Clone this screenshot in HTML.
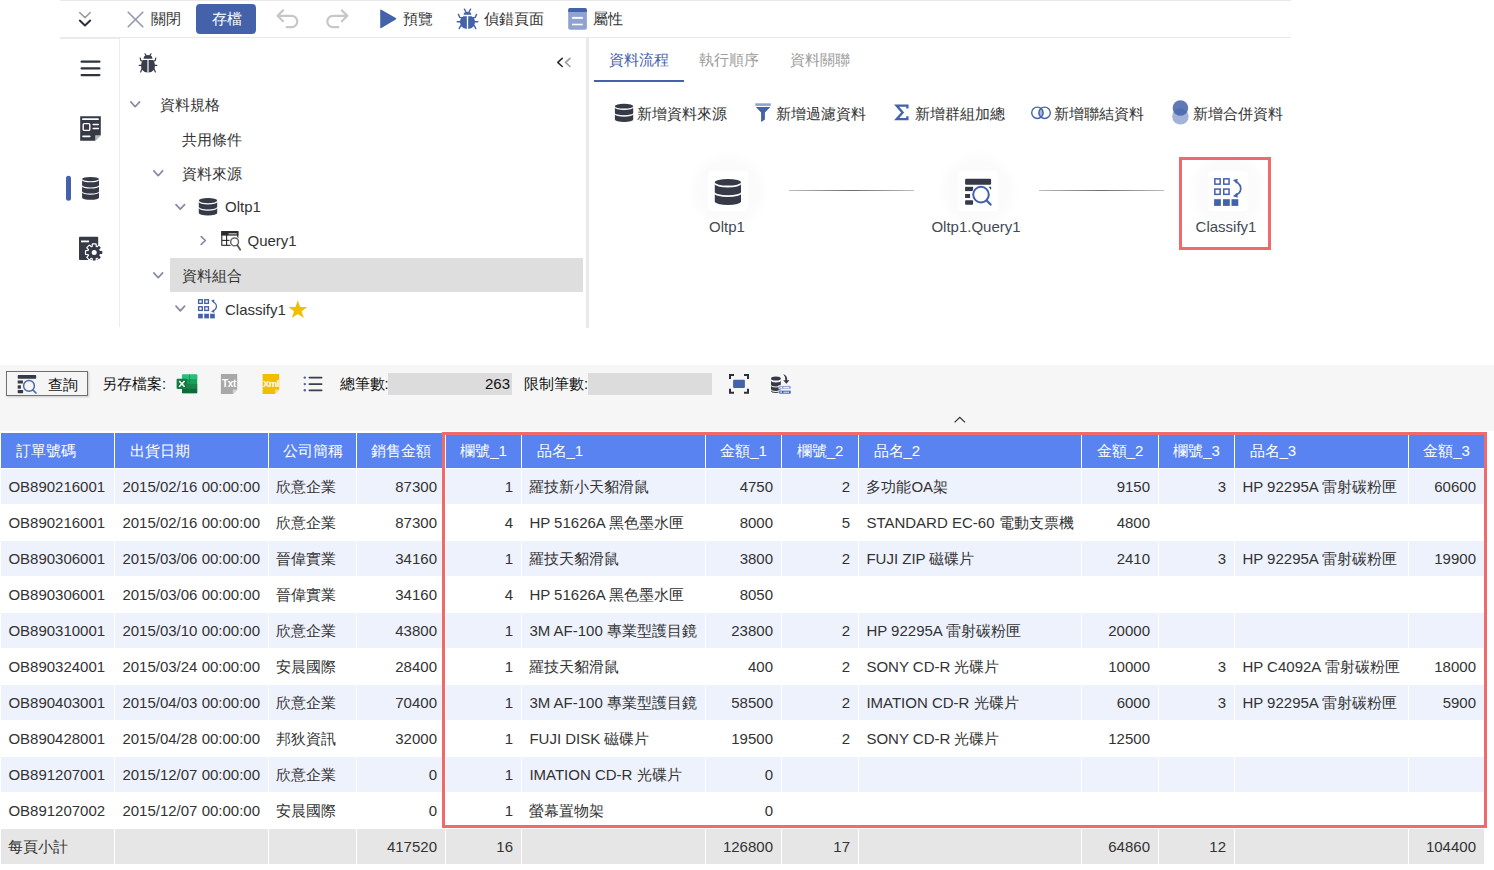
<!DOCTYPE html>
<html><head><meta charset="utf-8">
<style>
*{box-sizing:border-box}
html,body{margin:0;padding:0}
body{width:1494px;height:870px;overflow:hidden;background:#fff;position:relative;font-family:"Liberation Sans",sans-serif;color:#333;}
.a{position:absolute}
.t{position:absolute;white-space:nowrap;line-height:20px}
svg{position:absolute;overflow:visible}
.c{position:absolute}
.ct{position:absolute;white-space:nowrap;font-size:15px;color:#333}
.h{color:#fff}
</style></head><body>

<!-- ===== TOP TOOLBAR ===== -->
<div class="a" style="left:60px;top:0;width:1231px;height:1px;background:#e9e9e9"></div>
<div class="a" style="left:60px;top:37px;width:1231px;height:1px;background:#e9e9e9"></div>
<div class="a" style="left:60px;top:38px;width:59px;height:1px;background:#ececec"></div>
<!-- double chevron -->
<svg style="left:0;top:0" width="1494" height="40">
<polyline points="79.8,12.6 85,17.6 90.2,12.6" fill="none" stroke="#9c9ca0" stroke-width="1.5" stroke-linecap="round" stroke-linejoin="round"/>
<polyline points="79.8,20.6 85,25.4 90.2,20.6" fill="none" stroke="#2b2e3b" stroke-width="2" stroke-linecap="round" stroke-linejoin="round"/>
<!-- X -->
<line x1="128.2" y1="12.2" x2="142.8" y2="26.8" stroke="#9498b2" stroke-width="1.6" stroke-linecap="round"/>
<line x1="142.8" y1="12.2" x2="128.2" y2="26.8" stroke="#9498b2" stroke-width="1.6" stroke-linecap="round"/>
<!-- undo -->
<path d="M283,10.4 L277.6,15.8 L283,21.2 M277.8,15.8 H291.6 A5.7,5.7 0 0 1 291.6,27.2 H286.8" fill="none" stroke="#c6c6cb" stroke-width="2.2" stroke-linecap="round" stroke-linejoin="round"/>
<!-- redo -->
<path d="M341.8,10.4 L347.4,15.8 L341.8,21.2 M347.2,15.8 H333 A5.7,5.7 0 0 0 333,27.2 H338.2" fill="none" stroke="#c6c6cb" stroke-width="2.2" stroke-linecap="round" stroke-linejoin="round"/>
<!-- play -->
<path d="M380.2,10.4 Q380.2,9 381.4,9.7 L395.8,18 Q397,18.8 395.8,19.5 L381.4,27.9 Q380.2,28.6 380.2,27.2 Z" fill="#4362aa"/>
<!-- bug -->
<g fill="#4362aa" stroke="#4362aa">
<path d="M463.6,14.7 Q463.6,11.8 467.5,11.8 Q471.4,11.8 471.4,14.7 Z" stroke="none"/>
<path d="M463.4,16.2 H466.8 V29 Q462.6,28.6 460.8,25.8 Q459.8,23.4 460.1,20.4 Q460.6,17.6 463.4,16.2 Z" stroke="none"/>
<path d="M471.6,16.2 H468.2 V29 Q472.4,28.6 474.2,25.8 Q475.2,23.4 474.9,20.4 Q474.4,17.6 471.6,16.2 Z" stroke="none"/>
<g fill="none" stroke-width="1.4" stroke-linecap="round">
<path d="M464.4,9.2 L465.8,11.6 M470.6,9.2 L469.2,11.6"/>
<path d="M458.4,14.4 L459.8,17.4 L462,17.8 M476.6,14.4 L475.2,17.4 L473,17.8"/>
<path d="M457.2,21.8 H460.6 M477.8,21.8 H474.4"/>
<path d="M459.2,28.6 L460.6,25.8 L462.2,25.2 M475.8,28.6 L474.4,25.8 L472.8,25.2"/>
</g>
</g>
<!-- props -->
<rect x="568.2" y="8" width="18.7" height="21.7" rx="2" fill="#8fa2d0"/>
<path d="M568.2,12 V10 Q568.2,8 570.2,8 H584.9 Q586.9,8 586.9,10 V12 Z" fill="#4362aa"/>
<rect x="572" y="16.9" width="10.8" height="1.9" fill="#fff"/>
<rect x="572" y="23.7" width="10.8" height="1.6" fill="#fff"/>
</svg>
<div class="a" style="left:196px;top:4px;width:60px;height:30px;background:#4362aa;border-radius:4px"></div>
<div class="t" style="left:151px;top:9px;font-size:14.6px;color:#333">關閉</div>
<div class="t" style="left:212px;top:9px;font-size:14.6px;color:#fff">存檔</div>
<div class="t" style="left:403px;top:9px;font-size:14.6px;color:#333">預覽</div>
<div class="t" style="left:484px;top:9px;font-size:14.6px;color:#333">偵錯頁面</div>
<div class="t" style="left:593px;top:9px;font-size:14.6px;color:#333">屬性</div>


<!-- ===== SIDEBAR ===== -->
<div class="a" style="left:119px;top:38px;width:1px;height:289px;background:#ececec"></div>
<svg style="left:0;top:0" width="120" height="330">
<g stroke="#2f3241" stroke-width="2.2" stroke-linecap="round">
<line x1="81.6" y1="61.7" x2="99.4" y2="61.7"/>
<line x1="81.6" y1="68.4" x2="99.4" y2="68.4"/>
<line x1="81.6" y1="75.1" x2="99.4" y2="75.1"/>
</g>
<path d="M80.2,116.2 H100.8 V135 L95,140.8 H80.2 Z" fill="#363946"/>
<path d="M100.8,135.2 L95.2,140.8 V135.2 Z" fill="#b8b8bc"/>
<g stroke="#fff" stroke-linecap="round" fill="none">
<line x1="82.9" y1="119.2" x2="98" y2="119.2" stroke-width="1.8"/>
<rect x="83.2" y="123.6" width="6.6" height="6.8" rx="1" stroke-width="1.4"/>
<line x1="93.2" y1="124.6" x2="98.4" y2="124.6" stroke-width="1.5"/>
<line x1="93.2" y1="128.6" x2="98.4" y2="128.6" stroke-width="1.5"/>
<line x1="83" y1="136.4" x2="89.8" y2="136.4" stroke-width="1.6"/>
</g>
<rect x="66" y="175.8" width="5" height="25" rx="2.5" fill="#4362aa"/>
<g fill="#363946"><ellipse cx="90.55" cy="179.10" rx="8.45" ry="2.10"/><path d="M82.10,180.20 A8.45,2.10 0 0 0 99.00,180.20 V185.30 A8.45,2.10 0 0 1 82.10,185.30 Z"/><path d="M82.10,186.40 A8.45,2.10 0 0 0 99.00,186.40 V191.50 A8.45,2.10 0 0 1 82.10,191.50 Z"/><path d="M82.10,192.60 A8.45,2.10 0 0 0 99.00,192.60 V197.70 A8.45,2.10 0 0 1 82.10,197.70 Z"/></g>
<rect x="79" y="236.8" width="19.2" height="23.2" rx="0.8" fill="#363946"/>
<line x1="81" y1="241.4" x2="89" y2="241.4" stroke="#fff" stroke-width="1.8"/>
<g transform="translate(94.2,252.5)">
<g fill="#fff" stroke="#fff" stroke-width="2.4" stroke-linejoin="round">
<circle r="5.9"/>
<rect x="-1.4" y="-8.1" width="2.8" height="16.2"/>
<rect x="-1.4" y="-8.1" width="2.8" height="16.2" transform="rotate(45)"/>
<rect x="-1.4" y="-8.1" width="2.8" height="16.2" transform="rotate(90)"/>
<rect x="-1.4" y="-8.1" width="2.8" height="16.2" transform="rotate(135)"/>
</g>
<g fill="#363946">
<circle r="5.9"/>
<rect x="-1.4" y="-8.1" width="2.8" height="16.2" rx="0.4"/>
<rect x="-1.4" y="-8.1" width="2.8" height="16.2" rx="0.4" transform="rotate(45)"/>
<rect x="-1.4" y="-8.1" width="2.8" height="16.2" rx="0.4" transform="rotate(90)"/>
<rect x="-1.4" y="-8.1" width="2.8" height="16.2" rx="0.4" transform="rotate(135)"/>
</g>
<circle r="2.5" fill="#fff"/>
</g>
</svg>

<!-- ===== TREE ===== -->
<div class="a" style="left:586px;top:38px;width:3px;height:290px;background:#e9e9e9"></div>
<svg style="left:0;top:0" width="600" height="330">
<!-- bug -->
<g fill="#3a3d4b">
<path d="M144.2,56.6 Q144.6,55 148,55 Q151.4,55 151.8,56.6 L152.6,58.8 H143.4 Z"/>
<path d="M143.2,60 H147.5 V72.6 Q143.6,72.2 141.8,69.6 Q140.8,67 141.2,64 Q141.8,61.2 143.2,60 Z"/>
<path d="M152.8,60 H148.5 V72.6 Q152.4,72.2 154.2,69.6 Q155.2,67 154.8,64 Q154.2,61.2 152.8,60 Z"/>
<rect x="147.3" y="60" width="1.4" height="12.6" fill="#b9bac0"/>
<g fill="none" stroke="#3a3d4b" stroke-width="1.2" stroke-linecap="round">
<path d="M145,53.8 L146,55.4 M151,53.8 L150,55.4"/>
<path d="M140.2,58 L140.8,60.6 L143,61.4 M155.8,58 L155.2,60.6 L153,61.4"/>
<path d="M139.2,65.4 H141.8 M156.8,65.4 H154.2"/>
<path d="M140.6,72 L142,69 L143,68.4 M155.4,72 L154,69 L153,68.4"/>
</g>
</g>
<!-- << -->
<polyline points="562.2,58.3 557.8,62.4 562.2,66.5" fill="none" stroke="#2b2e3b" stroke-width="1.6" stroke-linecap="round" stroke-linejoin="round"/>
<polyline points="570,58.3 565.6,62.4 570,66.5" fill="none" stroke="#9b9da4" stroke-width="1.6" stroke-linecap="round" stroke-linejoin="round"/>
<!-- highlight row -->
<rect x="170" y="258" width="413" height="34" fill="#dedede"/>
<polyline points="130.8,101.9 135.2,106.7 139.6,101.9" fill="none" stroke="#858aa4" stroke-width="1.7" stroke-linecap="round" stroke-linejoin="round"/>
<polyline points="153.8,170.9 158.2,175.7 162.6,170.9" fill="none" stroke="#858aa4" stroke-width="1.7" stroke-linecap="round" stroke-linejoin="round"/>
<polyline points="176,204.6 180.3,209.2 184.6,204.6" fill="none" stroke="#858aa4" stroke-width="1.7" stroke-linecap="round" stroke-linejoin="round"/>
<polyline points="153.8,272.9 158.2,277.7 162.6,272.9" fill="none" stroke="#858aa4" stroke-width="1.7" stroke-linecap="round" stroke-linejoin="round"/>
<polyline points="176,306.2 180.3,310.8 184.6,306.2" fill="none" stroke="#858aa4" stroke-width="1.7" stroke-linecap="round" stroke-linejoin="round"/>
<polyline points="201.2,236.6 205.4,240.5 201.2,244.4" fill="none" stroke="#858aa4" stroke-width="1.7" stroke-linecap="round" stroke-linejoin="round"/>
<g fill="#363946"><ellipse cx="208.00" cy="200.60" rx="9.20" ry="2.60"/><path d="M198.80,201.90 A9.20,2.60 0 0 0 217.20,201.90 V206.80 A9.20,2.60 0 0 1 198.80,206.80 Z"/><path d="M198.80,208.10 A9.20,2.60 0 0 0 217.20,208.10 V213.00 A9.20,2.60 0 0 1 198.80,213.00 Z"/></g>
<!-- query table icon -->
<g>
<rect x="221.8" y="231.7" width="16" height="13.6" fill="none" stroke="#262626" stroke-width="1.1"/>
<rect x="221.3" y="231.2" width="17" height="4.4" fill="#2b2b2b"/>
<line x1="228.6" y1="233.8" x2="236.8" y2="233.8" stroke="#c8c8c8" stroke-width="1.2"/>
<line x1="226.6" y1="235" x2="226.6" y2="245.4" stroke="#262626" stroke-width="1.1"/>
<line x1="222" y1="240.4" x2="231" y2="240.4" stroke="#262626" stroke-width="1.1"/>
<circle cx="234.6" cy="241.9" r="5.4" fill="#fff"/>
<circle cx="234.6" cy="241.9" r="3.9" fill="none" stroke="#6a6a6a" stroke-width="1.5"/>
<line x1="237.4" y1="245.2" x2="240.2" y2="249.8" stroke="#555" stroke-width="1.7" stroke-linecap="round"/>
</g>
<g transform="translate(198.1,299.2) scale(0.69)" fill="none" stroke="#4362aa">
<rect x="0.75" y="0.75" width="5.3" height="5.3" stroke-width="2.0"/>
<rect x="9.65" y="0.75" width="5.3" height="5.3" stroke-width="2.0"/>
<rect x="0.75" y="10.95" width="5.3" height="5.3" stroke-width="2.0"/>
<rect x="9.65" y="10.95" width="5.3" height="5.3" stroke-width="2.0"/>
<rect x="0" y="21.1" width="6.8" height="6.7" fill="#4362aa" stroke="none"/>
<rect x="8.9" y="21.1" width="6.8" height="6.7" fill="#4362aa" stroke="none"/>
<rect x="17.4" y="21.1" width="6.8" height="6.7" fill="#4362aa" stroke="none"/>
<path d="M21.2,2.8 Q27.2,6.4 26.6,11.2 Q26,15.2 21.2,17.4" stroke-width="1.7"/>
<path d="M18.8,1.8 L23.6,0.6 L22.8,5.6 Z" fill="#4362aa" stroke="none"/>
<path d="M18.8,18.2 L23.2,14.4 L23.6,19.6 Z" fill="#4362aa" stroke="none"/>
</g>
<!-- star -->
<path d="M297.8,300.2 L300.2,306.9 L307.2,307 L301.6,311.3 L303.7,318 L297.8,314 L291.9,318 L294,311.3 L288.4,307 L295.4,306.9 Z" fill="#f0c000"/>
</svg>
<div class="t" style="left:160px;top:95px;font-size:15px;color:#333">資料規格</div>
<div class="t" style="left:182px;top:130px;font-size:15px;color:#333">共用條件</div>
<div class="t" style="left:182px;top:163.5px;font-size:15px;color:#333">資料來源</div>
<div class="t" style="left:225px;top:197px;font-size:15px;color:#333">Oltp1</div>
<div class="t" style="left:247.5px;top:230.5px;font-size:15px;color:#333">Query1</div>
<div class="t" style="left:182px;top:265.5px;font-size:15px;color:#333">資料組合</div>
<div class="t" style="left:225px;top:299.5px;font-size:15px;color:#333">Classify1</div>


<!-- ===== FLOW ===== -->
<div class="a" style="left:685.9000000000001px;top:149.0px;width:84px;height:84px;border-radius:50%;background:radial-gradient(circle, rgba(0,0,0,0.018) 0%, rgba(0,0,0,0.016) 50%, rgba(0,0,0,0) 70%)"></div><div class="a" style="left:708.2px;top:171.2px;width:39.5px;height:40px;border-radius:4px;background:#fff"></div>
<div class="a" style="left:935.9000000000001px;top:148.8px;width:84px;height:84px;border-radius:50%;background:radial-gradient(circle, rgba(0,0,0,0.018) 0%, rgba(0,0,0,0.016) 50%, rgba(0,0,0,0) 70%)"></div><div class="a" style="left:958.2px;top:171.0px;width:39.5px;height:40px;border-radius:4px;background:#fff"></div>
<div class="a" style="left:1185.9px;top:148.8px;width:84px;height:84px;border-radius:50%;background:radial-gradient(circle, rgba(0,0,0,0.018) 0%, rgba(0,0,0,0.016) 50%, rgba(0,0,0,0) 70%)"></div><div class="a" style="left:1208.2px;top:171.0px;width:39.5px;height:40px;border-radius:4px;background:#fff"></div>
<div class="a" style="left:789px;top:189.5px;width:125px;height:1px;background:linear-gradient(to right,#bdbdbd,#6e6e6e 50%,#bdbdbd)"></div>
<div class="a" style="left:1039px;top:189.5px;width:125px;height:1px;background:linear-gradient(to right,#bdbdbd,#6e6e6e 50%,#bdbdbd)"></div>
<div class="a" style="left:1179px;top:157px;width:92px;height:93px;border:3px solid #f06a6b"></div>
<svg style="left:0;top:0" width="1300" height="330">
<rect x="594" y="80" width="90" height="2" fill="#4362aa"/>
<g fill="#363946"><ellipse cx="624.05" cy="106.20" rx="9.15" ry="2.40"/><path d="M614.90,107.60 A9.15,2.40 0 0 0 633.20,107.60 V112.90 A9.15,2.40 0 0 1 614.90,112.90 Z"/><path d="M614.90,114.30 A9.15,2.40 0 0 0 633.20,114.30 V119.60 A9.15,2.40 0 0 1 614.90,119.60 Z"/></g>
<!-- filter -->
<rect x="755.3" y="103.3" width="15.5" height="2.6" fill="#8ea1d1"/>
<path d="M755.8,107.1 H770.4 L764.9,112.6 V119.6 L761.1,122 V112.6 Z" fill="#4362aa"/>
<!-- sigma -->
<path d="M907.4,108.6 V105.6 H896.6 L902.6,112.4 L896.6,119.2 H907.4 V116.2" fill="none" stroke="#4362aa" stroke-width="2.3" stroke-linejoin="miter"/>
<!-- join -->
<path d="M1041,107.6 A6.3,6.3 0 0 1 1041,118 A6.3,6.3 0 0 1 1041,107.6 Z" fill="#a9b6da"/>
<circle cx="1037.4" cy="112.8" r="5.7" fill="none" stroke="#4362aa" stroke-width="1.4"/>
<circle cx="1044.6" cy="112.8" r="5.7" fill="none" stroke="#4362aa" stroke-width="1.4"/>
<!-- merge -->
<circle cx="1180.4" cy="116.4" r="8.2" fill="#a3b2d8"/>
<circle cx="1180.4" cy="108" r="7.8" fill="#4362aa" fill-opacity="0.85"/>
<!-- node icons -->
<g fill="#363946"><ellipse cx="727.90" cy="182.30" rx="13.10" ry="3.30"/><path d="M714.80,184.10 A13.10,3.30 0 0 0 741.00,184.10 V191.95 A13.10,3.30 0 0 1 714.80,191.95 Z"/><path d="M714.80,193.75 A13.10,3.30 0 0 0 741.00,193.75 V201.60 A13.10,3.30 0 0 1 714.80,201.60 Z"/></g>
<g>
<rect x="965.1" y="178.8" width="26" height="6" rx="1.2" fill="#363946"/>
<rect x="965.1" y="186.8" width="8" height="4.3" fill="#363946"/>
<rect x="965.1" y="194" width="5" height="4" fill="#363946"/>
<rect x="965.1" y="200.3" width="8" height="4.4" rx="0.8" fill="#363946"/>
<path d="M988.6,186.8 H991.1 V190 Z" fill="#363946"/>
<circle cx="981" cy="194.6" r="9.4" fill="#fff"/>
<circle cx="981" cy="194.6" r="7.8" fill="none" stroke="#3f5fb0" stroke-width="2"/>
<line x1="986.6" y1="200.4" x2="990.6" y2="204.6" stroke="#3f5fb0" stroke-width="2.2" stroke-linecap="round"/>
</g>
<g transform="translate(1214.1,178.1) scale(1.0)" fill="none" stroke="#4362aa">
<rect x="0.75" y="0.75" width="5.3" height="5.3" stroke-width="1.5"/>
<rect x="9.65" y="0.75" width="5.3" height="5.3" stroke-width="1.5"/>
<rect x="0.75" y="10.95" width="5.3" height="5.3" stroke-width="1.5"/>
<rect x="9.65" y="10.95" width="5.3" height="5.3" stroke-width="1.5"/>
<rect x="0" y="21.1" width="6.8" height="6.7" fill="#4362aa" stroke="none"/>
<rect x="8.9" y="21.1" width="6.8" height="6.7" fill="#4362aa" stroke="none"/>
<rect x="17.4" y="21.1" width="6.8" height="6.7" fill="#4362aa" stroke="none"/>
<path d="M21.2,2.8 Q27.2,6.4 26.6,11.2 Q26,15.2 21.2,17.4" stroke-width="1.7"/>
<path d="M18.8,1.8 L23.6,0.6 L22.8,5.6 Z" fill="#4362aa" stroke="none"/>
<path d="M18.8,18.2 L23.2,14.4 L23.6,19.6 Z" fill="#4362aa" stroke="none"/>
</g>
</svg>
<div class="t" style="left:609px;top:50px;font-size:15px;color:#4362aa">資料流程</div>
<div class="t" style="left:699px;top:50px;font-size:15px;color:#9d9d9d">執行順序</div>
<div class="t" style="left:789.5px;top:50px;font-size:15px;color:#9d9d9d">資料關聯</div>
<div class="t" style="left:636.5px;top:103.5px;font-size:15px;color:#333">新增資料來源</div>
<div class="t" style="left:775.5px;top:103.5px;font-size:15px;color:#333">新增過濾資料</div>
<div class="t" style="left:914.5px;top:103.5px;font-size:15px;color:#333">新增群組加總</div>
<div class="t" style="left:1054px;top:103.5px;font-size:15px;color:#333">新增聯結資料</div>
<div class="t" style="left:1193px;top:103.5px;font-size:15px;color:#333">新增合併資料</div>
<div class="t" style="left:699px;top:216.5px;width:56px;text-align:center;font-size:15px;color:#444a55">Oltp1</div>
<div class="t" style="left:920px;top:216.5px;width:112px;text-align:center;font-size:15px;color:#444a55">Oltp1.Query1</div>
<div class="t" style="left:1180px;top:216.5px;width:92px;text-align:center;font-size:15px;color:#444a55">Classify1</div>


<!-- ===== BOTTOM ===== -->
<div class="a" style="left:0;top:365px;width:1494px;height:66px;background:#f6f6f6"></div>
<div class="a" style="left:6px;top:371px;width:82px;height:25px;border:1px solid #707070;background:#f5f5f5;box-shadow:1px 1px 2px rgba(0,0,0,0.18)"></div>
<svg style="left:0;top:0" width="820" height="440">
<!-- query icon -->
<rect x="17.7" y="375" width="18.5" height="3.7" rx="0.8" fill="#363946"/>
<rect x="17.7" y="380.5" width="5.2" height="3" fill="#363946"/>
<rect x="17.7" y="385.3" width="3.2" height="3.4" fill="#363946"/>
<rect x="17.7" y="390" width="5.4" height="3.2" rx="0.6" fill="#363946"/>
<circle cx="29" cy="385.9" r="6.6" fill="#f4f4f4"/>
<circle cx="29" cy="385.9" r="5.4" fill="none" stroke="#4a69b4" stroke-width="1.5"/>
<line x1="32.8" y1="389.8" x2="36" y2="393" stroke="#4a69b4" stroke-width="1.7" stroke-linecap="round"/>
<!-- excel -->
<rect x="182" y="374.6" width="15.2" height="18.6" rx="1" fill="#1a9e5c"/>
<rect x="182" y="374.6" width="15.2" height="4.6" fill="#21c27a"/>
<rect x="182" y="383.9" width="15.2" height="4.6" fill="#17864c"/>
<rect x="182" y="388.5" width="15.2" height="4.7" fill="#0f6a3a"/>
<line x1="189.6" y1="374.6" x2="189.6" y2="393.2" stroke="#127a44" stroke-width="0.6"/>
<rect x="176.6" y="378.7" width="10.6" height="10.2" rx="1" fill="#107c41"/>
<path d="M179.2,381 L184.6,386.8 M184.6,381 L179.2,386.8" stroke="#fff" stroke-width="1.5"/>
<!-- txt -->
<path d="M220.9,373.9 H237.2 V389.6 L232.9,393.9 H220.9 Z" fill="#a8a8a8"/>
<path d="M237.2,389.6 L232.9,393.9 V389.6 Z" fill="#d4d4d4"/>
<!-- xml -->
<path d="M262.6,373.9 H279.2 V389.6 L274.9,393.9 H262.6 Z" fill="#f0c000"/>
<path d="M279.2,389.6 L274.9,393.9 V389.6 Z" fill="#f7dc70"/>
<!-- list -->
<g fill="#4362aa"><circle cx="304.8" cy="377.6" r="1.2"/><circle cx="304.8" cy="384.1" r="1.2"/><circle cx="304.8" cy="390.3" r="1.2"/></g>
<g stroke="#3a3d4a" stroke-width="1.8" stroke-linecap="round"><line x1="309.4" y1="377.6" x2="321.6" y2="377.6"/><line x1="309.4" y1="384.1" x2="321.6" y2="384.1"/><line x1="309.4" y1="390.3" x2="321.6" y2="390.3"/></g>
<!-- fullscreen -->
<g fill="none" stroke="#2d303c" stroke-width="2">
<path d="M730,379 V375 H734"/><path d="M744,375 H748 V379"/><path d="M730,388.8 V392.8 H734"/><path d="M744,392.8 H748 V388.8"/>
</g>
<rect x="733.1" y="379.7" width="11.8" height="8.4" rx="1" fill="#4362aa"/>
<!-- db export -->
<g fill="#363946">
<ellipse cx="775.9" cy="378.4" rx="4.9" ry="2"/>
<path d="M771,380.4 A4.9,2 0 0 0 780.8,380.4 V384.4 A4.9,2 0 0 1 771,384.4 Z"/>
<path d="M771,385.4 A4.9,2 0 0 0 780.8,385.4 V389 A4.9,2 0 0 1 771,389 Z"/>
<path d="M771,390 A4.9,2 0 0 0 780.8,390 V391 A4.9,2 0 0 1 771,391 Z"/>
<path d="M783.2,374 Q787.4,375.6 787.2,380.2 L789.4,380.2 L786.4,383.8 L783.2,380.2 L785.4,380.2 Q785.6,376.8 783.2,374 Z"/>
</g>
<rect x="778.9" y="385.6" width="12.1" height="3.4" fill="#8ea1d1" stroke="#fff" stroke-width="0.6"/>
<rect x="778.9" y="390.2" width="12.1" height="3.8" fill="#4362aa" stroke="#fff" stroke-width="0.6"/>
<g fill="#fff"><rect x="780.4" y="386.6" width="1.4" height="1.4"/><rect x="783.4" y="386.9" width="5.6" height="0.9"/><rect x="780.4" y="391.4" width="1.4" height="1.4"/><rect x="783.4" y="391.7" width="5.6" height="0.9"/></g>
<!-- caret -->
<polyline points="954.6,422.4 959.8,417.4 965,422.4" fill="none" stroke="#333" stroke-width="1.3"/>
</svg>
<div class="t" style="left:47.5px;top:375px;font-size:14.6px;color:#111">查詢</div>
<div class="t" style="left:102px;top:374px;font-size:14.6px;color:#111">另存檔案:</div>
<div class="a" style="left:388px;top:372.5px;width:124px;height:22.5px;background:#dcdcdc"></div>
<div class="a" style="left:588px;top:372.5px;width:124px;height:22.5px;background:#dcdcdc"></div>
<div class="t" style="left:339.5px;top:374px;font-size:14.6px;color:#111">總筆數:</div>
<div class="t" style="left:524px;top:374px;font-size:14.6px;color:#111">限制筆數:</div>
<div class="t" style="left:388px;top:374px;width:122px;text-align:right;font-size:15px;color:#111">263</div>
<div class="t" style="left:221px;top:374px;width:16px;text-align:center;font-size:10px;font-weight:bold;color:#fff;letter-spacing:-0.3px">Txt</div>
<div class="t" style="left:262.6px;top:374px;width:16.6px;text-align:center;font-size:9.5px;font-weight:bold;color:#fff;letter-spacing:-0.5px">Xml</div>


<!-- ===== TABLE ===== -->
<div class="c" style="left:1px;top:433px;width:113px;height:35px;background:#5883f0"></div>
<div class="ct h" style="left:15.5px;top:433px;line-height:35px">訂單號碼</div>
<div class="c" style="left:115px;top:433px;width:153px;height:35px;background:#5883f0"></div>
<div class="ct h" style="left:129.5px;top:433px;line-height:35px">出貨日期</div>
<div class="c" style="left:269px;top:433px;width:87px;height:35px;background:#5883f0"></div>
<div class="ct h" style="left:269px;top:433px;width:87px;line-height:35px;text-align:center">公司簡稱</div>
<div class="c" style="left:357px;top:433px;width:88px;height:35px;background:#5883f0"></div>
<div class="ct h" style="left:357px;top:433px;width:88px;line-height:35px;text-align:center">銷售金額</div>
<div class="c" style="left:446px;top:433px;width:75px;height:35px;background:#5883f0"></div>
<div class="ct h" style="left:446px;top:433px;width:75px;line-height:35px;text-align:center">欄號_1</div>
<div class="c" style="left:522px;top:433px;width:183px;height:35px;background:#5883f0"></div>
<div class="ct h" style="left:536.5px;top:433px;line-height:35px">品名_1</div>
<div class="c" style="left:706px;top:433px;width:75px;height:35px;background:#5883f0"></div>
<div class="ct h" style="left:706px;top:433px;width:75px;line-height:35px;text-align:center">金額_1</div>
<div class="c" style="left:782px;top:433px;width:76px;height:35px;background:#5883f0"></div>
<div class="ct h" style="left:782px;top:433px;width:76px;line-height:35px;text-align:center">欄號_2</div>
<div class="c" style="left:859px;top:433px;width:222px;height:35px;background:#5883f0"></div>
<div class="ct h" style="left:873.5px;top:433px;line-height:35px">品名_2</div>
<div class="c" style="left:1082px;top:433px;width:76px;height:35px;background:#5883f0"></div>
<div class="ct h" style="left:1082px;top:433px;width:76px;line-height:35px;text-align:center">金額_2</div>
<div class="c" style="left:1159px;top:433px;width:75px;height:35px;background:#5883f0"></div>
<div class="ct h" style="left:1159px;top:433px;width:75px;line-height:35px;text-align:center">欄號_3</div>
<div class="c" style="left:1235px;top:433px;width:173px;height:35px;background:#5883f0"></div>
<div class="ct h" style="left:1249.5px;top:433px;line-height:35px">品名_3</div>
<div class="c" style="left:1409px;top:433px;width:75px;height:35px;background:#5883f0"></div>
<div class="ct h" style="left:1409px;top:433px;width:75px;line-height:35px;text-align:center">金額_3</div>
<div class="c" style="left:1px;top:469px;width:113px;height:35px;background:#eef2fd"></div>
<div class="ct" style="left:8.4px;top:469px;line-height:35px">OB890216001</div>
<div class="c" style="left:115px;top:469px;width:153px;height:35px;background:#eef2fd"></div>
<div class="ct" style="left:122.4px;top:469px;line-height:35px">2015/02/16 00:00:00</div>
<div class="c" style="left:269px;top:469px;width:87px;height:35px;background:#eef2fd"></div>
<div class="ct" style="left:276.4px;top:469px;line-height:35px">欣意企業</div>
<div class="c" style="left:357px;top:469px;width:88px;height:35px;background:#eef2fd"></div>
<div class="ct" style="left:357px;top:469px;width:80px;line-height:35px;text-align:right">87300</div>
<div class="c" style="left:446px;top:469px;width:75px;height:35px;background:#eef2fd"></div>
<div class="ct" style="left:446px;top:469px;width:67px;line-height:35px;text-align:right">1</div>
<div class="c" style="left:522px;top:469px;width:183px;height:35px;background:#eef2fd"></div>
<div class="ct" style="left:529.4px;top:469px;line-height:35px">羅技新小天貂滑鼠</div>
<div class="c" style="left:706px;top:469px;width:75px;height:35px;background:#eef2fd"></div>
<div class="ct" style="left:706px;top:469px;width:67px;line-height:35px;text-align:right">4750</div>
<div class="c" style="left:782px;top:469px;width:76px;height:35px;background:#eef2fd"></div>
<div class="ct" style="left:782px;top:469px;width:68px;line-height:35px;text-align:right">2</div>
<div class="c" style="left:859px;top:469px;width:222px;height:35px;background:#eef2fd"></div>
<div class="ct" style="left:866.4px;top:469px;line-height:35px">多功能OA架</div>
<div class="c" style="left:1082px;top:469px;width:76px;height:35px;background:#eef2fd"></div>
<div class="ct" style="left:1082px;top:469px;width:68px;line-height:35px;text-align:right">9150</div>
<div class="c" style="left:1159px;top:469px;width:75px;height:35px;background:#eef2fd"></div>
<div class="ct" style="left:1159px;top:469px;width:67px;line-height:35px;text-align:right">3</div>
<div class="c" style="left:1235px;top:469px;width:173px;height:35px;background:#eef2fd"></div>
<div class="ct" style="left:1242.4px;top:469px;line-height:35px">HP 92295A 雷射碳粉匣</div>
<div class="c" style="left:1409px;top:469px;width:75px;height:35px;background:#eef2fd"></div>
<div class="ct" style="left:1409px;top:469px;width:67px;line-height:35px;text-align:right">60600</div>
<div class="c" style="left:1px;top:505px;width:113px;height:35px;background:#ffffff"></div>
<div class="ct" style="left:8.4px;top:505px;line-height:35px">OB890216001</div>
<div class="c" style="left:115px;top:505px;width:153px;height:35px;background:#ffffff"></div>
<div class="ct" style="left:122.4px;top:505px;line-height:35px">2015/02/16 00:00:00</div>
<div class="c" style="left:269px;top:505px;width:87px;height:35px;background:#ffffff"></div>
<div class="ct" style="left:276.4px;top:505px;line-height:35px">欣意企業</div>
<div class="c" style="left:357px;top:505px;width:88px;height:35px;background:#ffffff"></div>
<div class="ct" style="left:357px;top:505px;width:80px;line-height:35px;text-align:right">87300</div>
<div class="c" style="left:446px;top:505px;width:75px;height:35px;background:#ffffff"></div>
<div class="ct" style="left:446px;top:505px;width:67px;line-height:35px;text-align:right">4</div>
<div class="c" style="left:522px;top:505px;width:183px;height:35px;background:#ffffff"></div>
<div class="ct" style="left:529.4px;top:505px;line-height:35px">HP 51626A 黑色墨水匣</div>
<div class="c" style="left:706px;top:505px;width:75px;height:35px;background:#ffffff"></div>
<div class="ct" style="left:706px;top:505px;width:67px;line-height:35px;text-align:right">8000</div>
<div class="c" style="left:782px;top:505px;width:76px;height:35px;background:#ffffff"></div>
<div class="ct" style="left:782px;top:505px;width:68px;line-height:35px;text-align:right">5</div>
<div class="c" style="left:859px;top:505px;width:222px;height:35px;background:#ffffff"></div>
<div class="ct" style="left:866.4px;top:505px;line-height:35px">STANDARD EC-60 電動支票機</div>
<div class="c" style="left:1082px;top:505px;width:76px;height:35px;background:#ffffff"></div>
<div class="ct" style="left:1082px;top:505px;width:68px;line-height:35px;text-align:right">4800</div>
<div class="c" style="left:1159px;top:505px;width:75px;height:35px;background:#ffffff"></div>
<div class="c" style="left:1235px;top:505px;width:173px;height:35px;background:#ffffff"></div>
<div class="c" style="left:1409px;top:505px;width:75px;height:35px;background:#ffffff"></div>
<div class="c" style="left:1px;top:541px;width:113px;height:35px;background:#eef2fd"></div>
<div class="ct" style="left:8.4px;top:541px;line-height:35px">OB890306001</div>
<div class="c" style="left:115px;top:541px;width:153px;height:35px;background:#eef2fd"></div>
<div class="ct" style="left:122.4px;top:541px;line-height:35px">2015/03/06 00:00:00</div>
<div class="c" style="left:269px;top:541px;width:87px;height:35px;background:#eef2fd"></div>
<div class="ct" style="left:276.4px;top:541px;line-height:35px">晉偉實業</div>
<div class="c" style="left:357px;top:541px;width:88px;height:35px;background:#eef2fd"></div>
<div class="ct" style="left:357px;top:541px;width:80px;line-height:35px;text-align:right">34160</div>
<div class="c" style="left:446px;top:541px;width:75px;height:35px;background:#eef2fd"></div>
<div class="ct" style="left:446px;top:541px;width:67px;line-height:35px;text-align:right">1</div>
<div class="c" style="left:522px;top:541px;width:183px;height:35px;background:#eef2fd"></div>
<div class="ct" style="left:529.4px;top:541px;line-height:35px">羅技天貂滑鼠</div>
<div class="c" style="left:706px;top:541px;width:75px;height:35px;background:#eef2fd"></div>
<div class="ct" style="left:706px;top:541px;width:67px;line-height:35px;text-align:right">3800</div>
<div class="c" style="left:782px;top:541px;width:76px;height:35px;background:#eef2fd"></div>
<div class="ct" style="left:782px;top:541px;width:68px;line-height:35px;text-align:right">2</div>
<div class="c" style="left:859px;top:541px;width:222px;height:35px;background:#eef2fd"></div>
<div class="ct" style="left:866.4px;top:541px;line-height:35px">FUJI ZIP 磁碟片</div>
<div class="c" style="left:1082px;top:541px;width:76px;height:35px;background:#eef2fd"></div>
<div class="ct" style="left:1082px;top:541px;width:68px;line-height:35px;text-align:right">2410</div>
<div class="c" style="left:1159px;top:541px;width:75px;height:35px;background:#eef2fd"></div>
<div class="ct" style="left:1159px;top:541px;width:67px;line-height:35px;text-align:right">3</div>
<div class="c" style="left:1235px;top:541px;width:173px;height:35px;background:#eef2fd"></div>
<div class="ct" style="left:1242.4px;top:541px;line-height:35px">HP 92295A 雷射碳粉匣</div>
<div class="c" style="left:1409px;top:541px;width:75px;height:35px;background:#eef2fd"></div>
<div class="ct" style="left:1409px;top:541px;width:67px;line-height:35px;text-align:right">19900</div>
<div class="c" style="left:1px;top:577px;width:113px;height:35px;background:#ffffff"></div>
<div class="ct" style="left:8.4px;top:577px;line-height:35px">OB890306001</div>
<div class="c" style="left:115px;top:577px;width:153px;height:35px;background:#ffffff"></div>
<div class="ct" style="left:122.4px;top:577px;line-height:35px">2015/03/06 00:00:00</div>
<div class="c" style="left:269px;top:577px;width:87px;height:35px;background:#ffffff"></div>
<div class="ct" style="left:276.4px;top:577px;line-height:35px">晉偉實業</div>
<div class="c" style="left:357px;top:577px;width:88px;height:35px;background:#ffffff"></div>
<div class="ct" style="left:357px;top:577px;width:80px;line-height:35px;text-align:right">34160</div>
<div class="c" style="left:446px;top:577px;width:75px;height:35px;background:#ffffff"></div>
<div class="ct" style="left:446px;top:577px;width:67px;line-height:35px;text-align:right">4</div>
<div class="c" style="left:522px;top:577px;width:183px;height:35px;background:#ffffff"></div>
<div class="ct" style="left:529.4px;top:577px;line-height:35px">HP 51626A 黑色墨水匣</div>
<div class="c" style="left:706px;top:577px;width:75px;height:35px;background:#ffffff"></div>
<div class="ct" style="left:706px;top:577px;width:67px;line-height:35px;text-align:right">8050</div>
<div class="c" style="left:782px;top:577px;width:76px;height:35px;background:#ffffff"></div>
<div class="c" style="left:859px;top:577px;width:222px;height:35px;background:#ffffff"></div>
<div class="c" style="left:1082px;top:577px;width:76px;height:35px;background:#ffffff"></div>
<div class="c" style="left:1159px;top:577px;width:75px;height:35px;background:#ffffff"></div>
<div class="c" style="left:1235px;top:577px;width:173px;height:35px;background:#ffffff"></div>
<div class="c" style="left:1409px;top:577px;width:75px;height:35px;background:#ffffff"></div>
<div class="c" style="left:1px;top:613px;width:113px;height:35px;background:#eef2fd"></div>
<div class="ct" style="left:8.4px;top:613px;line-height:35px">OB890310001</div>
<div class="c" style="left:115px;top:613px;width:153px;height:35px;background:#eef2fd"></div>
<div class="ct" style="left:122.4px;top:613px;line-height:35px">2015/03/10 00:00:00</div>
<div class="c" style="left:269px;top:613px;width:87px;height:35px;background:#eef2fd"></div>
<div class="ct" style="left:276.4px;top:613px;line-height:35px">欣意企業</div>
<div class="c" style="left:357px;top:613px;width:88px;height:35px;background:#eef2fd"></div>
<div class="ct" style="left:357px;top:613px;width:80px;line-height:35px;text-align:right">43800</div>
<div class="c" style="left:446px;top:613px;width:75px;height:35px;background:#eef2fd"></div>
<div class="ct" style="left:446px;top:613px;width:67px;line-height:35px;text-align:right">1</div>
<div class="c" style="left:522px;top:613px;width:183px;height:35px;background:#eef2fd"></div>
<div class="ct" style="left:529.4px;top:613px;line-height:35px">3M AF-100 專業型護目鏡</div>
<div class="c" style="left:706px;top:613px;width:75px;height:35px;background:#eef2fd"></div>
<div class="ct" style="left:706px;top:613px;width:67px;line-height:35px;text-align:right">23800</div>
<div class="c" style="left:782px;top:613px;width:76px;height:35px;background:#eef2fd"></div>
<div class="ct" style="left:782px;top:613px;width:68px;line-height:35px;text-align:right">2</div>
<div class="c" style="left:859px;top:613px;width:222px;height:35px;background:#eef2fd"></div>
<div class="ct" style="left:866.4px;top:613px;line-height:35px">HP 92295A 雷射碳粉匣</div>
<div class="c" style="left:1082px;top:613px;width:76px;height:35px;background:#eef2fd"></div>
<div class="ct" style="left:1082px;top:613px;width:68px;line-height:35px;text-align:right">20000</div>
<div class="c" style="left:1159px;top:613px;width:75px;height:35px;background:#eef2fd"></div>
<div class="c" style="left:1235px;top:613px;width:173px;height:35px;background:#eef2fd"></div>
<div class="c" style="left:1409px;top:613px;width:75px;height:35px;background:#eef2fd"></div>
<div class="c" style="left:1px;top:649px;width:113px;height:35px;background:#ffffff"></div>
<div class="ct" style="left:8.4px;top:649px;line-height:35px">OB890324001</div>
<div class="c" style="left:115px;top:649px;width:153px;height:35px;background:#ffffff"></div>
<div class="ct" style="left:122.4px;top:649px;line-height:35px">2015/03/24 00:00:00</div>
<div class="c" style="left:269px;top:649px;width:87px;height:35px;background:#ffffff"></div>
<div class="ct" style="left:276.4px;top:649px;line-height:35px">安晨國際</div>
<div class="c" style="left:357px;top:649px;width:88px;height:35px;background:#ffffff"></div>
<div class="ct" style="left:357px;top:649px;width:80px;line-height:35px;text-align:right">28400</div>
<div class="c" style="left:446px;top:649px;width:75px;height:35px;background:#ffffff"></div>
<div class="ct" style="left:446px;top:649px;width:67px;line-height:35px;text-align:right">1</div>
<div class="c" style="left:522px;top:649px;width:183px;height:35px;background:#ffffff"></div>
<div class="ct" style="left:529.4px;top:649px;line-height:35px">羅技天貂滑鼠</div>
<div class="c" style="left:706px;top:649px;width:75px;height:35px;background:#ffffff"></div>
<div class="ct" style="left:706px;top:649px;width:67px;line-height:35px;text-align:right">400</div>
<div class="c" style="left:782px;top:649px;width:76px;height:35px;background:#ffffff"></div>
<div class="ct" style="left:782px;top:649px;width:68px;line-height:35px;text-align:right">2</div>
<div class="c" style="left:859px;top:649px;width:222px;height:35px;background:#ffffff"></div>
<div class="ct" style="left:866.4px;top:649px;line-height:35px">SONY CD-R 光碟片</div>
<div class="c" style="left:1082px;top:649px;width:76px;height:35px;background:#ffffff"></div>
<div class="ct" style="left:1082px;top:649px;width:68px;line-height:35px;text-align:right">10000</div>
<div class="c" style="left:1159px;top:649px;width:75px;height:35px;background:#ffffff"></div>
<div class="ct" style="left:1159px;top:649px;width:67px;line-height:35px;text-align:right">3</div>
<div class="c" style="left:1235px;top:649px;width:173px;height:35px;background:#ffffff"></div>
<div class="ct" style="left:1242.4px;top:649px;line-height:35px">HP C4092A 雷射碳粉匣</div>
<div class="c" style="left:1409px;top:649px;width:75px;height:35px;background:#ffffff"></div>
<div class="ct" style="left:1409px;top:649px;width:67px;line-height:35px;text-align:right">18000</div>
<div class="c" style="left:1px;top:685px;width:113px;height:35px;background:#eef2fd"></div>
<div class="ct" style="left:8.4px;top:685px;line-height:35px">OB890403001</div>
<div class="c" style="left:115px;top:685px;width:153px;height:35px;background:#eef2fd"></div>
<div class="ct" style="left:122.4px;top:685px;line-height:35px">2015/04/03 00:00:00</div>
<div class="c" style="left:269px;top:685px;width:87px;height:35px;background:#eef2fd"></div>
<div class="ct" style="left:276.4px;top:685px;line-height:35px">欣意企業</div>
<div class="c" style="left:357px;top:685px;width:88px;height:35px;background:#eef2fd"></div>
<div class="ct" style="left:357px;top:685px;width:80px;line-height:35px;text-align:right">70400</div>
<div class="c" style="left:446px;top:685px;width:75px;height:35px;background:#eef2fd"></div>
<div class="ct" style="left:446px;top:685px;width:67px;line-height:35px;text-align:right">1</div>
<div class="c" style="left:522px;top:685px;width:183px;height:35px;background:#eef2fd"></div>
<div class="ct" style="left:529.4px;top:685px;line-height:35px">3M AF-100 專業型護目鏡</div>
<div class="c" style="left:706px;top:685px;width:75px;height:35px;background:#eef2fd"></div>
<div class="ct" style="left:706px;top:685px;width:67px;line-height:35px;text-align:right">58500</div>
<div class="c" style="left:782px;top:685px;width:76px;height:35px;background:#eef2fd"></div>
<div class="ct" style="left:782px;top:685px;width:68px;line-height:35px;text-align:right">2</div>
<div class="c" style="left:859px;top:685px;width:222px;height:35px;background:#eef2fd"></div>
<div class="ct" style="left:866.4px;top:685px;line-height:35px">IMATION CD-R 光碟片</div>
<div class="c" style="left:1082px;top:685px;width:76px;height:35px;background:#eef2fd"></div>
<div class="ct" style="left:1082px;top:685px;width:68px;line-height:35px;text-align:right">6000</div>
<div class="c" style="left:1159px;top:685px;width:75px;height:35px;background:#eef2fd"></div>
<div class="ct" style="left:1159px;top:685px;width:67px;line-height:35px;text-align:right">3</div>
<div class="c" style="left:1235px;top:685px;width:173px;height:35px;background:#eef2fd"></div>
<div class="ct" style="left:1242.4px;top:685px;line-height:35px">HP 92295A 雷射碳粉匣</div>
<div class="c" style="left:1409px;top:685px;width:75px;height:35px;background:#eef2fd"></div>
<div class="ct" style="left:1409px;top:685px;width:67px;line-height:35px;text-align:right">5900</div>
<div class="c" style="left:1px;top:721px;width:113px;height:35px;background:#ffffff"></div>
<div class="ct" style="left:8.4px;top:721px;line-height:35px">OB890428001</div>
<div class="c" style="left:115px;top:721px;width:153px;height:35px;background:#ffffff"></div>
<div class="ct" style="left:122.4px;top:721px;line-height:35px">2015/04/28 00:00:00</div>
<div class="c" style="left:269px;top:721px;width:87px;height:35px;background:#ffffff"></div>
<div class="ct" style="left:276.4px;top:721px;line-height:35px">邦狄資訊</div>
<div class="c" style="left:357px;top:721px;width:88px;height:35px;background:#ffffff"></div>
<div class="ct" style="left:357px;top:721px;width:80px;line-height:35px;text-align:right">32000</div>
<div class="c" style="left:446px;top:721px;width:75px;height:35px;background:#ffffff"></div>
<div class="ct" style="left:446px;top:721px;width:67px;line-height:35px;text-align:right">1</div>
<div class="c" style="left:522px;top:721px;width:183px;height:35px;background:#ffffff"></div>
<div class="ct" style="left:529.4px;top:721px;line-height:35px">FUJI DISK 磁碟片</div>
<div class="c" style="left:706px;top:721px;width:75px;height:35px;background:#ffffff"></div>
<div class="ct" style="left:706px;top:721px;width:67px;line-height:35px;text-align:right">19500</div>
<div class="c" style="left:782px;top:721px;width:76px;height:35px;background:#ffffff"></div>
<div class="ct" style="left:782px;top:721px;width:68px;line-height:35px;text-align:right">2</div>
<div class="c" style="left:859px;top:721px;width:222px;height:35px;background:#ffffff"></div>
<div class="ct" style="left:866.4px;top:721px;line-height:35px">SONY CD-R 光碟片</div>
<div class="c" style="left:1082px;top:721px;width:76px;height:35px;background:#ffffff"></div>
<div class="ct" style="left:1082px;top:721px;width:68px;line-height:35px;text-align:right">12500</div>
<div class="c" style="left:1159px;top:721px;width:75px;height:35px;background:#ffffff"></div>
<div class="c" style="left:1235px;top:721px;width:173px;height:35px;background:#ffffff"></div>
<div class="c" style="left:1409px;top:721px;width:75px;height:35px;background:#ffffff"></div>
<div class="c" style="left:1px;top:757px;width:113px;height:35px;background:#eef2fd"></div>
<div class="ct" style="left:8.4px;top:757px;line-height:35px">OB891207001</div>
<div class="c" style="left:115px;top:757px;width:153px;height:35px;background:#eef2fd"></div>
<div class="ct" style="left:122.4px;top:757px;line-height:35px">2015/12/07 00:00:00</div>
<div class="c" style="left:269px;top:757px;width:87px;height:35px;background:#eef2fd"></div>
<div class="ct" style="left:276.4px;top:757px;line-height:35px">欣意企業</div>
<div class="c" style="left:357px;top:757px;width:88px;height:35px;background:#eef2fd"></div>
<div class="ct" style="left:357px;top:757px;width:80px;line-height:35px;text-align:right">0</div>
<div class="c" style="left:446px;top:757px;width:75px;height:35px;background:#eef2fd"></div>
<div class="ct" style="left:446px;top:757px;width:67px;line-height:35px;text-align:right">1</div>
<div class="c" style="left:522px;top:757px;width:183px;height:35px;background:#eef2fd"></div>
<div class="ct" style="left:529.4px;top:757px;line-height:35px">IMATION CD-R 光碟片</div>
<div class="c" style="left:706px;top:757px;width:75px;height:35px;background:#eef2fd"></div>
<div class="ct" style="left:706px;top:757px;width:67px;line-height:35px;text-align:right">0</div>
<div class="c" style="left:782px;top:757px;width:76px;height:35px;background:#eef2fd"></div>
<div class="c" style="left:859px;top:757px;width:222px;height:35px;background:#eef2fd"></div>
<div class="c" style="left:1082px;top:757px;width:76px;height:35px;background:#eef2fd"></div>
<div class="c" style="left:1159px;top:757px;width:75px;height:35px;background:#eef2fd"></div>
<div class="c" style="left:1235px;top:757px;width:173px;height:35px;background:#eef2fd"></div>
<div class="c" style="left:1409px;top:757px;width:75px;height:35px;background:#eef2fd"></div>
<div class="c" style="left:1px;top:793px;width:113px;height:35px;background:#ffffff"></div>
<div class="ct" style="left:8.4px;top:793px;line-height:35px">OB891207002</div>
<div class="c" style="left:115px;top:793px;width:153px;height:35px;background:#ffffff"></div>
<div class="ct" style="left:122.4px;top:793px;line-height:35px">2015/12/07 00:00:00</div>
<div class="c" style="left:269px;top:793px;width:87px;height:35px;background:#ffffff"></div>
<div class="ct" style="left:276.4px;top:793px;line-height:35px">安晨國際</div>
<div class="c" style="left:357px;top:793px;width:88px;height:35px;background:#ffffff"></div>
<div class="ct" style="left:357px;top:793px;width:80px;line-height:35px;text-align:right">0</div>
<div class="c" style="left:446px;top:793px;width:75px;height:35px;background:#ffffff"></div>
<div class="ct" style="left:446px;top:793px;width:67px;line-height:35px;text-align:right">1</div>
<div class="c" style="left:522px;top:793px;width:183px;height:35px;background:#ffffff"></div>
<div class="ct" style="left:529.4px;top:793px;line-height:35px">螢幕置物架</div>
<div class="c" style="left:706px;top:793px;width:75px;height:35px;background:#ffffff"></div>
<div class="ct" style="left:706px;top:793px;width:67px;line-height:35px;text-align:right">0</div>
<div class="c" style="left:782px;top:793px;width:76px;height:35px;background:#ffffff"></div>
<div class="c" style="left:859px;top:793px;width:222px;height:35px;background:#ffffff"></div>
<div class="c" style="left:1082px;top:793px;width:76px;height:35px;background:#ffffff"></div>
<div class="c" style="left:1159px;top:793px;width:75px;height:35px;background:#ffffff"></div>
<div class="c" style="left:1235px;top:793px;width:173px;height:35px;background:#ffffff"></div>
<div class="c" style="left:1409px;top:793px;width:75px;height:35px;background:#ffffff"></div>
<div class="c" style="left:1px;top:829px;width:113px;height:35px;background:#e6e6e6"></div>
<div class="ct" style="left:8.4px;top:829px;line-height:35px">每頁小計</div>
<div class="c" style="left:115px;top:829px;width:153px;height:35px;background:#e6e6e6"></div>
<div class="c" style="left:269px;top:829px;width:87px;height:35px;background:#e6e6e6"></div>
<div class="c" style="left:357px;top:829px;width:88px;height:35px;background:#e6e6e6"></div>
<div class="ct" style="left:357px;top:829px;width:80px;line-height:35px;text-align:right">417520</div>
<div class="c" style="left:446px;top:829px;width:75px;height:35px;background:#e6e6e6"></div>
<div class="ct" style="left:446px;top:829px;width:67px;line-height:35px;text-align:right">16</div>
<div class="c" style="left:522px;top:829px;width:183px;height:35px;background:#e6e6e6"></div>
<div class="c" style="left:706px;top:829px;width:75px;height:35px;background:#e6e6e6"></div>
<div class="ct" style="left:706px;top:829px;width:67px;line-height:35px;text-align:right">126800</div>
<div class="c" style="left:782px;top:829px;width:76px;height:35px;background:#e6e6e6"></div>
<div class="ct" style="left:782px;top:829px;width:68px;line-height:35px;text-align:right">17</div>
<div class="c" style="left:859px;top:829px;width:222px;height:35px;background:#e6e6e6"></div>
<div class="c" style="left:1082px;top:829px;width:76px;height:35px;background:#e6e6e6"></div>
<div class="ct" style="left:1082px;top:829px;width:68px;line-height:35px;text-align:right">64860</div>
<div class="c" style="left:1159px;top:829px;width:75px;height:35px;background:#e6e6e6"></div>
<div class="ct" style="left:1159px;top:829px;width:67px;line-height:35px;text-align:right">12</div>
<div class="c" style="left:1235px;top:829px;width:173px;height:35px;background:#e6e6e6"></div>
<div class="c" style="left:1409px;top:829px;width:75px;height:35px;background:#e6e6e6"></div>
<div class="ct" style="left:1409px;top:829px;width:67px;line-height:35px;text-align:right">104400</div>
<div class="a" style="left:442px;top:432px;width:1045px;height:396px;border:3px solid #f06a6b"></div>

</body></html>
